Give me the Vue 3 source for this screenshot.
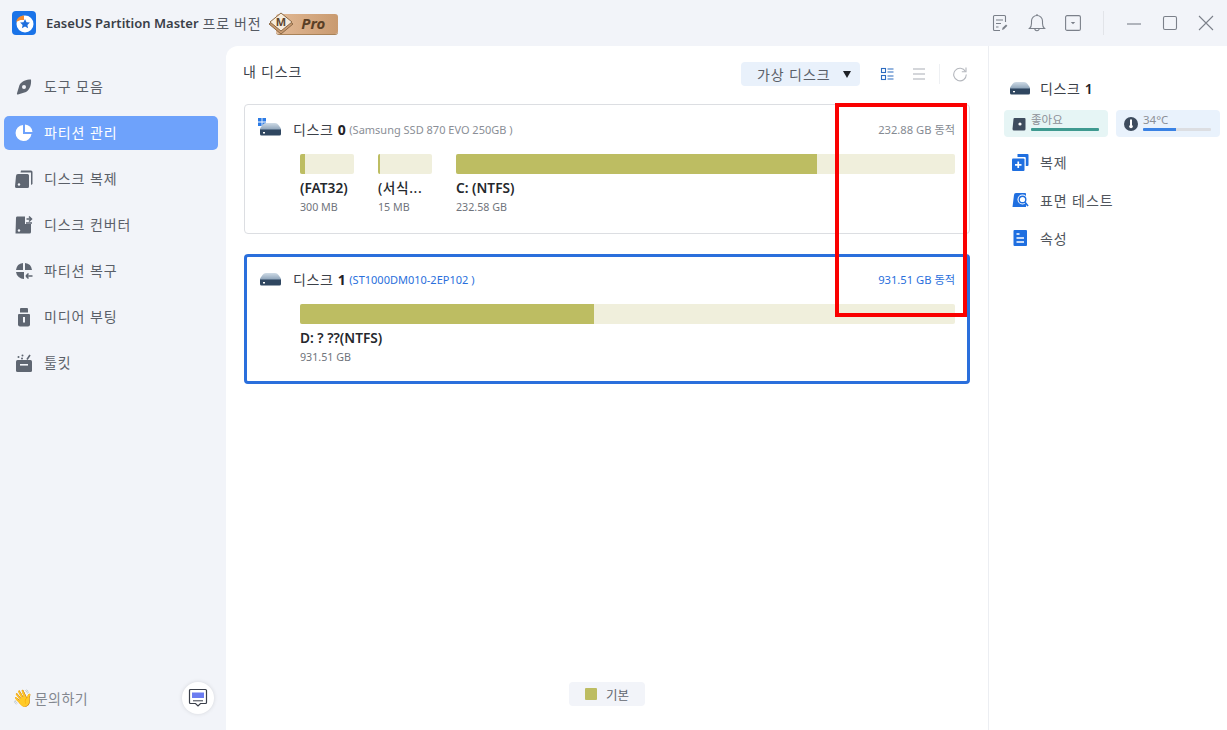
<template>
  <div class="app">
    <header class="titlebar">
      <div class="logo">
        <svg width="24" height="24" viewBox="0 0 24 24">
          <rect width="24" height="24" rx="4" fill="#1a73e8" />
          <circle cx="13" cy="13" r="8.500" fill="#fff" />
          <path d="M4 11a8 8 0 0 1 8-6.500V9H8.500z" fill="#f28a2e" />
          <path d="M13 8l1.500 3.200 3.400.4-2.500 2.300.7 3.400-3.100-1.700-3.100 1.700.7-3.400-2.500-2.300 3.400-.4z" fill="#1f6fdc" />
        </svg>
      </div>
      <span class="app-name">EaseUS Partition Master</span>
      <span class="app-edition">프로 버전</span>
      <div class="pro-badge">
        <svg class="pro-gem" width="28" height="24" viewBox="0 0 28 24">
          <path d="M13 3L25 12 13 22 1 12z" fill="#c89a70" stroke="#8c6a48" stroke-width="1" />
          <path d="M13 1L24 10 13 19 2 10z" fill="#f7ecdc" stroke="#8c6a48" stroke-width="1" />
          <text x="13" y="14" text-anchor="middle" class="gem-text">M</text>
        </svg>
        <span class="pro-text">Pro</span>
      </div>
      <div class="window-tools">
        <svg class="tool" width="18" height="18" viewBox="0 0 18 18" fill="none" stroke="#7b808a" stroke-width="1.100">
          <path d="M14.500 8V2.500a1 1 0 0 0-1-1h-10a1 1 0 0 0-1 1v13a1 1 0 0 0 1 1H9" />
          <path d="M5 6h7M5 9.500h5M5 13h2.500" />
          <path d="M11 16l.6-2.200 3.400-3.400 1.400 1.400-3.400 3.500z" fill="#7b808a" stroke="none" />
        </svg>
        <svg class="tool" width="18" height="20" viewBox="0 0 18 20" fill="none" stroke="#7b808a" stroke-width="1.100">
          <path d="M1.500 15.500c1.500-1.300 2-2.500 2-5V8a5.500 5.500 0 0 1 11 0v2.500c0 2.500.5 3.700 2 5z" />
          <path d="M9 2.500V1M6.800 15.500a2.200 2.200 0 0 0 4.400 0" />
        </svg>
        <svg class="tool" width="16" height="16" viewBox="0 0 16 16" fill="none" stroke="#7b808a" stroke-width="1.100">
          <rect x=".6" y=".6" width="14.800" height="14.800" rx="1.500" />
          <path d="M5.800 7h4.400L8 9.300z" fill="#7b808a" stroke="none" />
        </svg>
        <i class="tool-sep"></i>
        <svg width="16" height="16" viewBox="0 0 16 16" stroke="#7b808a" stroke-width="1.100"><path d="M1 9h14" /></svg>
        <svg width="16" height="16" viewBox="0 0 16 16" fill="none" stroke="#7b808a" stroke-width="1.100"><rect x="1.500" y="1.500" width="13" height="13" rx="1.500" /></svg>
        <svg width="16" height="16" viewBox="0 0 16 16" stroke="#7b808a" stroke-width="1.100"><path d="M1 1l14 14M15 1L1 15" /></svg>
      </div>
    </header>

    <div class="body">
      <aside class="sidebar">
        <nav class="nav">
          <div v-for="item in navItems" :key="item.label" class="nav-item" :class="{ active: item.active }">
            <svg class="nav-icon" width="20" height="20" viewBox="0 0 20 20" v-html="item.icon"></svg>
            <span>{{ item.label }}</span>
          </div>
        </nav>
        <div class="side-foot">
          <span class="contact">
            <span class="wave">👋</span>
            <span>문의하기</span>
          </span>
          <div class="chat-btn">
            <svg width="20" height="20" viewBox="0 0 20 20" fill="none">
              <path d="M2.500 1.500h15a1 1 0 0 1 1 1v12a1 1 0 0 1-1 1h-5L10 18l-2.500-2.500h-5a1 1 0 0 1-1-1v-12a1 1 0 0 1 1-1z" stroke="#3a3f4a" stroke-width="1.200" fill="#fff" />
              <rect x="4" y="4.500" width="12" height="5.500" fill="#6b7cf0" />
              <path d="M5 12.800h10" stroke="#3a3f4a" stroke-width="1" />
            </svg>
          </div>
        </div>
      </aside>

      <main class="panel">
        <section class="content">
          <div class="content-head">
            <h1>내 디스크</h1>
            <div class="head-tools">
              <div class="virtual-select">
                <span>가상 디스크</span>
                <i class="caret"></i>
              </div>
              <svg width="14" height="14" viewBox="0 0 14 14" fill="none" stroke="#2d6cc0" stroke-width="1.100">
                <rect x="1.500" y="1.500" width="4" height="4" />
                <rect x="1.500" y="8.500" width="4" height="4" />
                <path d="M7.500 2h6M7.500 5h6M7.500 9h6M7.500 12h6" />
              </svg>
              <svg class="list-icon" width="14" height="14" viewBox="0 0 14 14" stroke="#a9adb5" stroke-width="1.100">
                <path d="M1 2h12M1 7h12M1 12h12" />
              </svg>
              <i class="head-sep"></i>
              <svg width="16" height="16" viewBox="0 0 16 16" fill="none" stroke="#b4b7bd" stroke-width="1.100">
                <path d="M13.500 5.500a6.300 6.300 0 1 0 .8 3" />
                <path d="M14 1.500v4.200H9.800" />
              </svg>
            </div>
          </div>

          <div class="disk-list">
            <article v-for="disk in disks" :key="disk.id" class="disk-card" :class="{ selected: disk.selected }">
              <div class="disk-head">
                <svg class="disk-icon" width="24" height="22" viewBox="0 0 24 22">
                  <defs>
                    <linearGradient :id="'dome' + disk.id" x1="0" y1="0" x2="0" y2="1">
                      <stop offset="0" stop-color="#cfdbe6" />
                      <stop offset="1" stop-color="#7f98b0" />
                    </linearGradient>
                  </defs>
                  <template v-if="disk.windows">
                    <path d="M0 0h3.600v3.600H0zM4.400 0H8v3.600H4.400zM0 4.400h3.600V8H0zM4.400 4.400H8V8H4.400z" fill="#2c7be5" />
                  </template>
                  <path d="M8 5h9c1.500 0 2.500.8 3.500 2l2.500 3.500V13H2v-2.500L4.500 7C5.500 5.800 6.500 5 8 5z" :fill="'url(#dome' + disk.id + ')'" />
                  <path d="M2 11.500h21V16a1.500 1.500 0 0 1-1.500 1.500h-18A1.500 1.500 0 0 1 2 16z" fill="#2f4660" />
                  <rect x="5" y="14" width="2" height="1.500" fill="#fff" />
                </svg>
                <span class="disk-title">디스크 <b>{{ disk.id }}</b></span>
                <span class="disk-model">({{ disk.model }} )</span>
                <span class="disk-size">{{ disk.size }} 동적</span>
              </div>
              <div class="bars">
                <div v-for="part in disk.parts" :key="part.name" class="part" :class="{ grow: part.grow }">
                  <div class="bar"><div class="bar-fill" :style="{ width: part.fill + 'px' }"></div></div>
                  <div class="part-name" :class="{ thin: part.thin }">{{ part.name }}</div>
                  <div class="part-size">{{ part.size }}</div>
                </div>
              </div>
            </article>
          </div>

          <div class="legend">
            <div class="legend-chip"><i></i><span>기본</span></div>
          </div>
        </section>

        <aside class="details">
          <div class="detail-head">
            <svg width="22" height="14" viewBox="0 0 22 14">
              <defs>
                <linearGradient id="domeSide" x1="0" y1="0" x2="0" y2="1">
                  <stop offset="0" stop-color="#cfdbe6" />
                  <stop offset="1" stop-color="#7f98b0" />
                </linearGradient>
              </defs>
              <path d="M7 1h8c1.500 0 2.500.8 3.500 2L21 6.500V9H1V6.500L3.500 3C4.500 1.800 5.500 1 7 1z" fill="url(#domeSide)" />
              <path d="M1 7.500h20V12a1.500 1.500 0 0 1-1.500 1.500h-17A1.500 1.500 0 0 1 1 12z" fill="#2f4660" />
              <rect x="4" y="10" width="2" height="1.300" fill="#fff" />
            </svg>
            <span>디스크 <b>1</b></span>
          </div>
          <div class="stats">
            <div class="stat good">
              <svg width="14" height="14" viewBox="0 0 14 14">
                <path d="M2.500 1h10a1 1 0 0 1 1 1v10a1.500 1.500 0 0 1-1.500 1.500H2A1.500 1.500 0 0 1 .5 12l1-10a1 1 0 0 1 1-1z" fill="#3e4c5e" />
                <circle cx="8" cy="7" r="1.600" fill="#fff" />
              </svg>
              <div class="stat-body">
                <span>좋아요</span>
                <div class="meter"><div class="meter-fill green"></div></div>
              </div>
            </div>
            <div class="stat temp">
              <svg width="14" height="14" viewBox="0 0 14 14">
                <circle cx="7" cy="7" r="7" fill="#3e4c5e" />
                <rect x="6" y="2.500" width="2" height="6" fill="#fff" />
                <circle cx="7" cy="9.500" r="1.800" fill="#fff" />
              </svg>
              <div class="stat-body">
                <span>34°C</span>
                <div class="meter"><div class="meter-fill blue"></div></div>
              </div>
            </div>
          </div>
          <ul class="actions">
            <li>
              <svg width="17" height="17" viewBox="0 0 17 17">
                <path d="M5.500 0h10a1 1 0 0 1 1 1v10a1 1 0 0 1-1 1h-1.700V4a1 1 0 0 0-1-1H5.500z" fill="#1f6fe0" />
                <rect x="0" y="4.500" width="12.500" height="12.500" rx="1" fill="#1f6fe0" />
                <path d="M3 10.800h6.500M6.250 7.500v6.500" stroke="#fff" stroke-width="1.700" />
              </svg>
              <span>복제</span>
            </li>
            <li>
              <svg width="17" height="17" viewBox="0 0 17 17">
                <path d="M4 1h9a2 2 0 0 1 1 .5V15H.5l1.500-12A2 2 0 0 1 4 1z" fill="#1f6fe0" />
                <circle cx="10.500" cy="7.500" r="5" fill="#fff" />
                <circle cx="10.500" cy="7.500" r="3.300" fill="none" stroke="#1f6fe0" stroke-width="1.400" />
                <path d="M13 10.200l3 3.800" stroke="#1f6fe0" stroke-width="1.700" />
              </svg>
              <span>표면 테스트</span>
            </li>
            <li>
              <svg width="17" height="17" viewBox="0 0 17 17">
                <rect x="1.500" y="0" width="13.500" height="16" rx="1" fill="#1f6fe0" />
                <path d="M4.500 4h3M4.500 8h7.500M4.500 12h7.500" stroke="#fff" stroke-width="1.600" />
              </svg>
              <span>속성</span>
            </li>
          </ul>
        </aside>
      </main>
    </div>

    <div class="highlight"></div>
  </div>
</template>

<script setup>
const navItems = [
  { label: '도구 모음', icon: '<path d="M17 2.500c.5 5-1 10-5 12.500L4 17.500c-.8.200-1.300-.4-1-1.200L5.500 8C8 4 12 2.500 17 2.500z" fill="#5f6672"/><circle cx="10" cy="10" r="2" fill="#f2f4f9"/>' },
  { label: '파티션 관리', active: true, icon: '<path d="M9 2v9h8.500A8 8 0 1 1 9 2z" fill="#fff"/><path d="M11 1.500a8 8 0 0 1 7.500 7.500H11z" fill="#fff"/>' },
  { label: '디스크 복제', icon: '<path d="M7 1.500h10a1.500 1.500 0 0 1 1.500 1.500v12l-1.500 1V3.500H6.500z" fill="#5f6672"/><path d="M4 5h9.500A1.500 1.500 0 0 1 15 6.500v11a1.500 1.500 0 0 1-1.500 1.500h-11A1.500 1.500 0 0 1 1 17.500l1-10.500A2 2 0 0 1 4 5z" fill="#5f6672"/><circle cx="5" cy="15.500" r="1.200" fill="#f2f4f9"/>' },
  { label: '디스크 컨버터', icon: '<path d="M3 1.500h8V9h6v8a1.500 1.500 0 0 1-1.500 1.500h-14L2 3a1.500 1.500 0 0 1 1-1.500z" fill="#5f6672"/><path d="M12.500 4h5M15 1.500L17.500 4 15 6.500" stroke="#5f6672" stroke-width="1.500" fill="none"/><circle cx="5" cy="15.500" r="1.200" fill="#f2f4f9"/><path d="M12 8h6" stroke="#5f6672" stroke-width="1.500"/>' },
  { label: '파티션 복구', icon: '<path d="M9 2v7H2a8 8 0 0 1 7-7z" fill="#5f6672"/><path d="M11 2a8 8 0 0 1 7 7h-7z" fill="#5f6672"/><path d="M2 11h8v7a8 8 0 0 1-8-7z" fill="#5f6672"/><path d="M12 15l2.500-2.500M12 15l2.500 2.500M12 15h6.500" stroke="#5f6672" stroke-width="1.500" fill="none"/>' },
  { label: '미디어 부팅', icon: '<path d="M7 1h6a1 1 0 0 1 1 1v3.500H6V2a1 1 0 0 1 1-1z" fill="#5f6672"/><path d="M5 7h10a1 1 0 0 1 1 1v9.500a2 2 0 0 1-2 2H6a2 2 0 0 1-2-2V8a1 1 0 0 1 1-1z" fill="#5f6672"/><rect x="9" y="10" width="2" height="5.500" fill="#f2f4f9"/>' },
  { label: '툴킷', icon: '<rect x="2" y="7" width="16" height="12" rx="1.500" fill="#5f6672"/><rect x="6" y="11" width="8" height="1.600" fill="#f2f4f9"/><path d="M13 6.500L16 2" stroke="#5f6672" stroke-width="1.600"/><circle cx="4.500" cy="4" r="1" fill="#5f6672"/><circle cx="8.500" cy="2.500" r="1" fill="#5f6672"/><circle cx="8" cy="5.500" r="1" fill="#5f6672"/>' }
]

const disks = [
  {
    id: '0',
    model: 'Samsung SSD 870 EVO 250GB',
    size: '232.88 GB',
    windows: true,
    parts: [
      { name: '(FAT32)', size: '300 MB', fill: 5 },
      { name: '(서식...', size: '15 MB', fill: 2, thin: true },
      { name: 'C: (NTFS)', size: '232.58 GB', fill: 361, grow: true }
    ]
  },
  {
    id: '1',
    model: 'ST1000DM010-2EP102',
    size: '931.51 GB',
    selected: true,
    parts: [{ name: 'D: ? ??(NTFS)', size: '931.51 GB', fill: 294, grow: true }]
  }
]
</script>

<style>
html, body { margin: 0; padding: 0; }
</style>

<style scoped>
.app {
  position: relative;
  width: 1227px;
  height: 730px;
  overflow: hidden;
  display: flex;
  flex-direction: column;
  background: #f2f4f9;
  font-family: "Noto Sans", "Noto Sans CJK KR", sans-serif;
  color: #3c4149;
}
.titlebar {
  height: 46px;
  flex: none;
  display: flex;
  align-items: center;
  padding: 0 13px 0 12px;
  box-sizing: border-box;
}
.logo { width: 24px; height: 24px; margin-right: 10px; }
.logo svg { display: block; }
.app-name { font-size: 13px; font-weight: 600; color: #3a3f48; }
.app-edition { font-size: 14px; margin-left: 4px; color: #555a63; letter-spacing: .7px; }
.pro-badge {
  position: relative;
  width: 62px;
  height: 20px;
  margin-left: 15px;
  margin-top: 1px;
  padding-left: 25px;
  box-sizing: border-box;
  border-radius: 3px;
  background: linear-gradient(90deg, #e2b995, #c99a70);
  box-shadow: 0 1px 0 #a88258;
  display: flex;
  align-items: center;
}
.pro-gem { position: absolute; left: -8px; top: -2px; }
.gem-text { font-family: "Noto Sans", sans-serif; font-size: 11px; font-weight: 700; fill: #5d4630; }
.pro-text { font-size: 15px; font-weight: 700; font-style: italic; color: #5a3f26; line-height: 1; }
.window-tools {
  margin-left: auto;
  display: flex;
  align-items: center;
  gap: 20px;
}
.window-tools svg { display: block; }
.window-tools .tool { margin-right: -1px; }
.tool-sep { width: 1px; height: 24px; background: #e2e4e9; margin: 0 2px 0 3px; }

.body { flex: 1; display: flex; min-height: 0; }
.sidebar {
  width: 226px;
  flex: none;
  display: flex;
  flex-direction: column;
  justify-content: space-between;
  padding: 24px 8px 16px 4px;
  box-sizing: border-box;
}
.nav { display: flex; flex-direction: column; gap: 12px; }
.nav-item {
  height: 34px;
  display: flex;
  align-items: center;
  gap: 10px;
  padding-left: 10px;
  border-radius: 5px;
  font-size: 14px;
  letter-spacing: .9px;
  color: #5a5f68;
}
.nav-icon { flex: none; }
.nav-item span { margin-top: -2px; }
.nav-item.active { background: #6ea2fb; color: #fff; }
.side-foot {
  display: flex;
  align-items: center;
  justify-content: space-between;
  padding-left: 8px;
  padding-right: 4px;
}
.contact { display: flex; align-items: center; gap: 1px; font-size: 14px; letter-spacing: .5px; color: #83878f; }
.wave { font-family: "Noto Color Emoji", sans-serif; font-size: 17px; line-height: 1; color: #f1b23d; }
.chat-btn {
  width: 32px;
  height: 32px;
  border-radius: 50%;
  background: #fff;
  box-shadow: 0 0 4px rgba(0, 0, 0, .12);
  display: flex;
  align-items: center;
  justify-content: center;
}

.panel {
  flex: 1;
  display: flex;
  min-width: 0;
  background: #fff;
  border-radius: 12px 0 0 0;
}
.content {
  width: 763px;
  flex: none;
  box-sizing: border-box;
  padding: 16px 18px 0;
  border-right: 1px solid #eceef2;
  display: flex;
  flex-direction: column;
}
.content-head {
  height: 24px;
  display: flex;
  align-items: center;
  justify-content: space-between;
}
h1 { margin: -7px 0 0 -1px; font-size: 14px; font-weight: 400; letter-spacing: .8px; color: #3c4149; }
.head-tools { display: flex; align-items: center; margin-right: 2px; }
.virtual-select {
  width: 119px;
  height: 24px;
  border-radius: 4px;
  background: #e9f1fb;
  display: flex;
  align-items: center;
  padding-left: 16px;
  box-sizing: border-box;
  font-size: 14px;
  letter-spacing: .9px;
  color: #5a5f68;
  margin-right: 20px;
}
.caret {
  margin-left: 13px;
  width: 0;
  height: 0;
  border-left: 4.500px solid transparent;
  border-right: 4.500px solid transparent;
  border-top: 7px solid #1e2126;
}
.list-icon { margin-left: 18px; }
.head-sep { width: 1px; height: 20px; background: #eef0f3; margin: 0 12px 0 13px; }

.disk-list { margin-top: 18px; display: flex; flex-direction: column; gap: 20px; }
.disk-card {
  height: 130px;
  box-sizing: border-box;
  border: 1px solid #dcdee2;
  border-radius: 4px;
  padding: 11px 14px 0 13px;
}
.disk-card.selected { border: 3px solid #2a6fdc; padding: 9px 12px 0 11px; }
.disk-head { height: 26px; display: flex; align-items: center; }
.disk-icon { flex: none; margin-right: 11px; }
.disk-title { font-size: 14px; letter-spacing: .6px; color: #3c4149; }
.disk-title b { font-weight: 700; color: #1f2227; }
.disk-model { margin-left: 3px; font-size: 11px; color: #8a8e96; }
.disk-size { margin-left: auto; font-size: 11.200px; color: #858a92; }
.selected .disk-model, .selected .disk-size { color: #2a6fdc; }
.bars { display: flex; gap: 24px; margin-top: 12px; margin-left: 42px; }
.part { width: 54px; flex: none; }
.part.grow { flex: 1; width: auto; }
.bar { height: 20px; border-radius: 2px; background: #f0efdc; overflow: hidden; }
.bar-fill { height: 100%; background: #bdbd62; }
.part-name { margin-top: 5px; font-size: 13.700px; line-height: 18px; font-weight: 600; color: #25282d; white-space: nowrap; }
.part-name.thin { font-weight: 500; letter-spacing: .6px; }
.part-size { font-size: 10.700px; line-height: 20px; color: #70747c; white-space: nowrap; }

.legend { margin-top: auto; margin-bottom: 24px; display: flex; justify-content: center; }
.legend-chip {
  width: 76px;
  height: 24px;
  border-radius: 4px;
  background: #f2f4f9;
  display: flex;
  align-items: center;
  gap: 9px;
  padding-left: 16px;
  box-sizing: border-box;
  font-size: 12.500px;
  color: #61666e;
}
.legend-chip i { width: 12px; height: 12px; border-radius: 1px; background: #bdbd62; }

.details { flex: 1; min-width: 0; padding: 34px 7px 0 15px; box-sizing: border-box; }
.detail-head { display: flex; align-items: center; gap: 9px; padding-left: 5px; height: 16px; font-size: 14px; letter-spacing: .6px; color: #3c4149; }
.detail-head b { color: #1f2227; font-weight: 600; }
.stats { display: flex; gap: 8px; margin-top: 14px; }
.stat {
  width: 104px;
  flex: none;
  height: 27px;
  border-radius: 4px;
  display: flex;
  align-items: center;
  gap: 5px;
  padding: 0 9px 0 8px;
  box-sizing: border-box;
}
.stat.good { background: #e6f5f5; }
.stat.temp { background: #e9f2fc; }
.stat-body { flex: 1; font-size: 11.500px; line-height: 14px; color: #8b8f96; display: flex; flex-direction: column; }
.stat-body span { margin-top: -3px; }
.meter { height: 3px; margin-top: 1px; background: #dcdee2; border-radius: 1px; overflow: hidden; }
.meter-fill { height: 100%; }
.meter-fill.green { width: 100%; background: #3f9a90; }
.meter-fill.blue { width: 49%; background: #3a82e4; }
.actions { list-style: none; margin: 13px 0 0; padding: 0; display: flex; flex-direction: column; gap: 14px; }
.actions li {
  height: 24px;
  display: flex;
  align-items: center;
  gap: 11px;
  padding-left: 8px;
  font-size: 14px;
  letter-spacing: .9px;
  color: #50555d;
}

.highlight {
  position: absolute;
  left: 835px;
  top: 103px;
  width: 132px;
  height: 214px;
  box-sizing: border-box;
  border: 4px solid #fa0000;
  pointer-events: none;
}
</style>
